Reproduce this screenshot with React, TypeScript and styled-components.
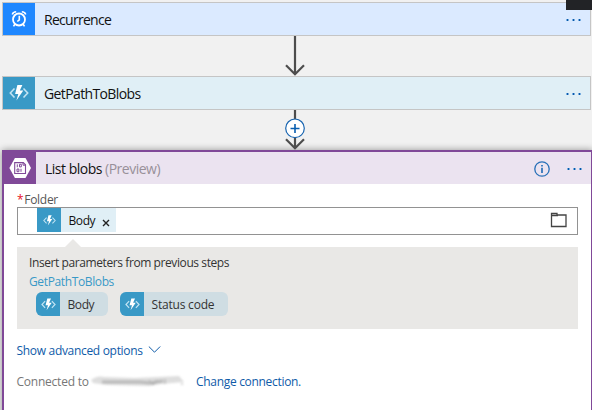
import React from 'react';
import styled, { createGlobalStyle } from 'styled-components';

const GlobalStyle = createGlobalStyle`
  * { box-sizing: border-box; }
  body { margin: 0; background: #f1f1f1; overflow: hidden; }
`;

const Designer = styled.main`
  position: relative;
  width: 592px;
  height: 410px;
  padding: 2px 0 0 2px;
  overflow: hidden;
  background: #f1f1f1;
  color: #111;
  font-family: 'Segoe UI', 'Open Sans', sans-serif;
  font-size: 12px;
  white-space: nowrap;
`;

const CornerOverlay = styled.div`
  position: absolute;
  top: 0;
  right: 0;
  width: 26px;
  height: 10px;
  background: #222326;
`;

const StepCard = styled.section<{ $tint: string }>`
  display: flex;
  align-items: center;
  width: 589px;
  height: 34px;
  border: 1px solid #c5c5c5;
  background: ${p => p.$tint};
`;

const StepIcon = styled.div<{ $color: string }>`
  display: flex;
  align-items: center;
  justify-content: center;
  width: 32px;
  height: 32px;
  background: ${p => p.$color};
`;

const StepTitle = styled.span<{ $spacing: number }>`
  flex: 1;
  margin-left: 9px;
  padding-top: 2px;
  font-size: 14px;
  line-height: 20px;
  letter-spacing: ${p => p.$spacing}px;
`;

const Muted = styled.span`
  color: #989099;
`;

const MenuDots = styled.button`
  display: flex;
  gap: 3px;
  margin: 2px 9px 0 0;
  padding: 0;
  border: 0;
  background: none;
  i {
    width: 3px;
    height: 2px;
    background: linear-gradient(90deg, #7aaee0 1px, #0a58a8 1px 2px, #7aaee0 2px);
  }
`;

const Connector = styled.div`
  display: flex;
  justify-content: center;
  width: 586px;
  height: 40px;
  svg { display: block; }
`;

const ActionCard = styled.section`
  width: 591px;
  height: 270px;
  border: 2px solid #804998;
  background: #fff;
  box-shadow: 0 0 7px rgba(0, 0, 0, 0.4);
`;

const ActionHeader = styled.header`
  display: flex;
  align-items: center;
  height: 32px;
  background: #ebe3f0;
`;

const InfoButton = styled.button`
  display: flex;
  margin: 1px 17px 0 0;
  padding: 0;
  border: 0;
  background: none;
`;

const ActionBody = styled.div`
  width: 561px;
  margin-left: 13px;
  padding-top: 8px;
`;

const FieldLabel = styled.label`
  display: block;
  height: 15px;
  font-size: 12px;
  line-height: 16px;
  letter-spacing: -0.3px;
  color: #555;
`;

const Required = styled.span`
  margin-right: 1px;
  color: #e81123;
`;

const FolderInput = styled.div`
  display: flex;
  align-items: flex-start;
  justify-content: space-between;
  height: 28px;
  padding: 0 10px 0 19px;
  border: 1px solid #929292;
  > svg { margin-top: 4px; }
`;

const Token = styled.span<{ $rounded?: boolean; $width: number }>`
  display: flex;
  align-items: center;
  width: ${p => p.$width}px;
  height: 24px;
  overflow: hidden;
  border-radius: ${p => (p.$rounded ? 6 : 0)}px;
  background: ${p => (p.$rounded ? '#cfdde3' : '#e0eff6')};
  color: ${p => (p.$rounded ? '#333' : '#111')};
`;

const TokenIcon = styled.span`
  display: flex;
  align-items: center;
  justify-content: center;
  width: 24px;
  height: 24px;
  background: #3999c6;
`;

const TokenLabel = styled.span<{ $spacing?: number }>`
  margin-left: 7.5px;
  padding-top: 1px;
  letter-spacing: ${p => p.$spacing ?? -0.4}px;
`;

const RemoveToken = styled.svg`
  margin: 6px 0 0 7px;
`;

const Pointer = styled.div`
  width: 16px;
  height: 8px;
  margin: 4px 0 0 48px;
  background: #e9e8e6;
  clip-path: polygon(50% 0, 100% 100%, 0 100%);
`;

const Parameters = styled.div`
  height: 82px;
  padding: 7px 0 0 12px;
  background: #e9e8e6;
`;

const PanelHeading = styled.div`
  height: 19px;
  line-height: 18px;
  letter-spacing: -0.41px;
  color: #333;
`;

const SourceName = styled.div`
  height: 19px;
  line-height: 18px;
  letter-spacing: -0.37px;
  color: #3999c6;
`;

const TokenRow = styled.div`
  display: flex;
  gap: 12px;
  margin-left: 7px;
`;

const AdvancedLink = styled.a`
  display: flex;
  align-items: center;
  gap: 5px;
  height: 20px;
  margin: 11px 0 0 -0.5px;
  letter-spacing: -0.31px;
  color: #0f5ba8;
`;

const Connection = styled.div`
  display: flex;
  align-items: center;
  height: 20px;
  margin: 11px 0 0 -0.5px;
  color: #777;
`;

const ConnectionLabel = styled.span`
  width: 72.5px;
  letter-spacing: -0.23px;
`;

const Redaction = styled.svg`
  filter: blur(1px);
`;

const ChangeLink = styled.a`
  margin-left: 11px;
  letter-spacing: -0.31px;
  color: #0f5ba8;
`;

const Dots = () => <MenuDots aria-label="More"><i /><i /><i /></MenuDots>;

const AlarmIcon = () => (
  <svg width="18" height="18" viewBox="0 0 18 18" fill="none" stroke="#fff" strokeWidth="1.8">
    <circle cx="9" cy="9.5" r="6" />
    <path d="M9.3 5.8V9.8L7.3 11.5M5 14 3.5 16.4M13 14l1.5 2.4M2.3 4.4c.5-1.7 1.9-2.5 3.9-2.6M15.7 4.4c-.5-1.7-1.9-2.5-3.9-2.6" strokeWidth="1.6" />
  </svg>
);

const FunctionIcon = ({ size = 20 }: { size?: number }) => (
  <svg width={size} height={size} viewBox="0 0 20 20">
    <path d="M5.5 5.5 1.3 10l4.2 4.5M14.5 5.5l4.2 4.5-4.2 4.5" fill="none" stroke="#c3e4f3" strokeWidth="1.6" />
    <path d="M8.4 2h5L10.8 7.6h3.5L7.4 17.5 9.3 11H6.1z" fill="#fff" />
  </svg>
);

const BlobIcon = () => (
  <svg width="24" height="24" viewBox="0 0 24 24">
    <path d="M6.9 2h10.6L23 12l-5.5 10H6.9L1.4 12z" fill="#fff" />
    <path d="M6.7 6.6h8.6l2.2 2.2v8.7H6.7z" fill="#fff" stroke="#804998" strokeWidth="1.1" />
    <path d="M15 6.5v2.7h2.5M9.3 8.3v3M11.5 8.3h1.8v2.6h-1.8zM9 13h1.9v2.7H9zM13 12.8v3" fill="none" stroke="#804998" strokeWidth="1" />
  </svg>
);

const InfoIcon = () => (
  <svg width="16" height="16" viewBox="0 0 16 16" fill="none" stroke="#2870b8">
    <circle cx="8" cy="8" r="7.2" strokeWidth="1.3" />
    <path d="M8 6.7V12M8 4v1.5" strokeWidth="1.7" />
  </svg>
);

const FolderIcon = () => (
  <svg width="17" height="16" viewBox="0 0 17 16" fill="none" stroke="#444">
    <path d="M1.5 1.5H7V3H16v11.5H1.5zM1.5 3.5H8" strokeWidth="1.3" />
  </svg>
);

const Arrow = ({ insertable = false }: { insertable?: boolean }) => (
  <svg width="22" height="40" viewBox="0 0 22 40">
    <path d="M11 0v38M2 29.3l9 9 9-9" fill="none" stroke="#4d4d4d" strokeWidth="2.2" />
    {insertable && (
      <>
        <circle cx="11" cy="18.3" r="9.3" fill="#fff" stroke="#1764b0" strokeWidth="1.2" />
        <path d="M6.5 18.5h9M11 14v9" stroke="#075db0" strokeWidth="1.6" />
      </>
    )}
  </svg>
);

export default function App() {
  return (
    <>
      <GlobalStyle />
      <Designer>
        <StepCard $tint="#dbeaff">
          <StepIcon $color="#1e87ff"><AlarmIcon /></StepIcon>
          <StepTitle $spacing={-0.72}>Recurrence</StepTitle>
          <Dots />
        </StepCard>
        <Connector><Arrow /></Connector>
        <StepCard $tint="#e0eff6">
          <StepIcon $color="#3999c6"><FunctionIcon /></StepIcon>
          <StepTitle $spacing={-0.62}>GetPathToBlobs</StepTitle>
          <Dots />
        </StepCard>
        <Connector><Arrow insertable /></Connector>
        <ActionCard>
          <ActionHeader>
            <StepIcon $color="#804998"><BlobIcon /></StepIcon>
            <StepTitle $spacing={-0.5}>List blobs <Muted>(Preview)</Muted></StepTitle>
            <InfoButton aria-label="Information"><InfoIcon /></InfoButton>
            <Dots />
          </ActionHeader>
          <ActionBody>
            <FieldLabel><Required>*</Required>Folder</FieldLabel>
            <FolderInput>
              <Token $width={79}>
                <TokenIcon><FunctionIcon size={13} /></TokenIcon>
                <TokenLabel>Body</TokenLabel>
                <RemoveToken width="8" height="8" viewBox="0 0 8 8">
                  <path d="M1 1l6 6M7 1 1 7" stroke="#222" strokeWidth="1.4" />
                </RemoveToken>
              </Token>
              <FolderIcon />
            </FolderInput>
            <Pointer />
            <Parameters>
              <PanelHeading>Insert parameters from previous steps</PanelHeading>
              <SourceName>GetPathToBlobs</SourceName>
              <TokenRow>
                <Token $rounded $width={72}>
                  <TokenIcon><FunctionIcon size={15} /></TokenIcon>
                  <TokenLabel>Body</TokenLabel>
                </Token>
                <Token $rounded $width={108}>
                  <TokenIcon><FunctionIcon size={15} /></TokenIcon>
                  <TokenLabel $spacing={-0.2}>Status code</TokenLabel>
                </Token>
              </TokenRow>
            </Parameters>
            <AdvancedLink>
              Show advanced options
              <svg width="13" height="8" viewBox="0 0 13 8">
                <path d="M.8 .5l5.7 5.7L12.2 .5" fill="none" stroke="#0f5ba8" />
              </svg>
            </AdvancedLink>
            <Connection>
              <ConnectionLabel>Connected to</ConnectionLabel>
              <Redaction width="96" height="14" viewBox="0 0 96 14">
                <path d="M2 6Q8 1 16 3L46 4 90 2 95 8 72 10 60 12 18 11 4 9z" fill="#dedede" />
                <path d="M13 8h38l10 1 13-2" fill="none" stroke="#adadad" strokeWidth="3" opacity=".7" />
                <path d="M60 6l4 5 4-5M76 5v5M92 10h2" fill="none" stroke="#aaa" />
              </Redaction>
              <ChangeLink>Change connection.</ChangeLink>
            </Connection>
          </ActionBody>
        </ActionCard>
        <CornerOverlay />
      </Designer>
    </>
  );
}
